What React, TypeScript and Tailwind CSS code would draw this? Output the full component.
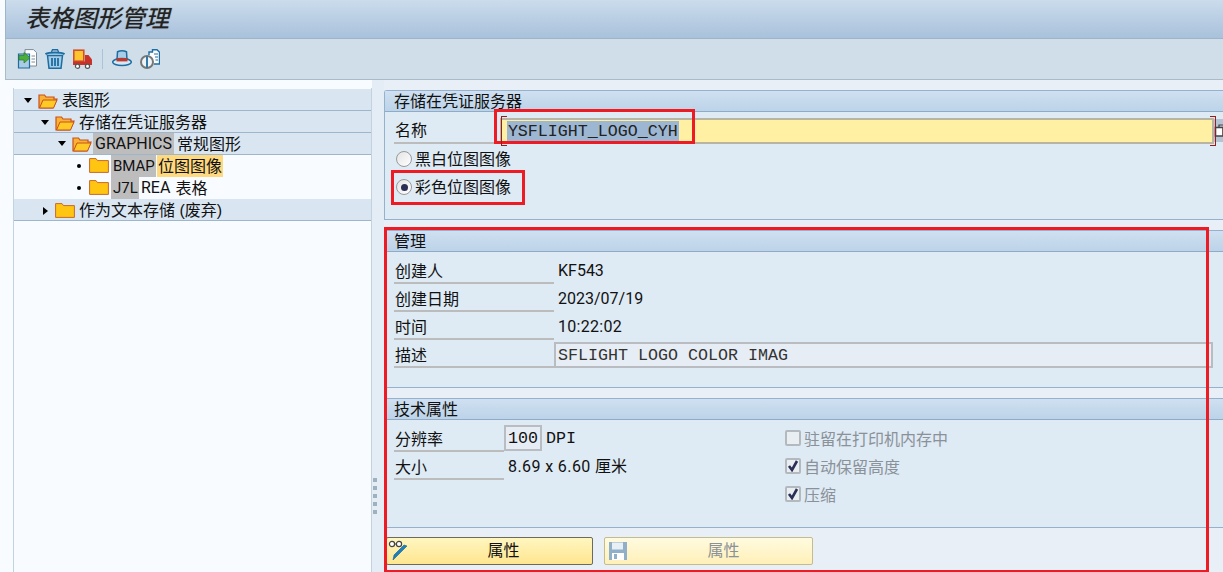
import type { ReactNode } from 'react'

const MONO = "[font-family:'Liberation_Mono',monospace] text-[16.67px]"

function FolderOpen() {
  return (
    <svg className="w-[20px] h-[18px] shrink-0" viewBox="0 0 20 18">
      <path d="M1 3V16H15L19 7H16V5H8L6.5 3Z" fill="#f9b233" stroke="#c8501e" strokeWidth="1.2" />
      <path d="M5 8H19L15.5 16H1.5Z" fill="#ffc926" stroke="#c8501e" strokeWidth="1" />
    </svg>
  )
}

function FolderClosed() {
  return (
    <svg className="w-[20px] h-[18px] shrink-0" viewBox="0 0 20 18">
      <path d="M.6 1.6H7L8.5 3.6H19.4V15.4H.6Z" fill="#ffc510" stroke="#c8682a" strokeWidth="1" />
    </svg>
  )
}

function ArrowDown() {
  return <span className="w-[10px] h-[18px] shrink-0 flex items-center justify-center mr-[5px]"><span className="w-0 h-0 border-x-[4px] border-x-transparent border-t-[5px] border-t-black" /></span>
}

function ArrowRight() {
  return <span className="w-[10px] h-[18px] shrink-0 flex items-center justify-center mr-[5px]"><span className="w-0 h-0 border-y-[4px] border-y-transparent border-l-[5px] border-l-black" /></span>
}

function Bullet() {
  return <span className="w-[10px] h-[18px] shrink-0 flex items-center justify-center mr-[5px]"><span className="w-[4px] h-[4px] rounded-full bg-black" /></span>
}

function TreeRow({ pad, blue, children }: { pad: string; blue?: boolean; children: ReactNode }) {
  return (
    <div className={`h-[22px] flex items-center whitespace-nowrap ${pad} ${blue ? 'bg-[#d9e6f1] border-b border-[#9db6cc]' : ''}`}>
      {children}
    </div>
  )
}

function Lat({ children }: { children: ReactNode }) {
  return <span className="[font-family:Roboto,sans-serif] text-[16px]">{children}</span>
}

function Panel({ title, height, children }: { title: string; height: string; children: ReactNode }) {
  return (
    <section className={`${height} border border-r-0 border-[#95b1cc] rounded-tl-[3px] bg-[#deeaf4] flex flex-col`}>
      <div className="h-[21px] shrink-0 pl-[9px] pt-[2px] flex items-center bg-gradient-to-b from-[#cfe0f1] to-[#bcd3e8] border-b border-[#8fabc8] text-[16px] text-[#111]">
        {title}
      </div>
      {children}
    </section>
  )
}

function InfoRow({ label, children }: { label: string; children: ReactNode }) {
  return (
    <div className="h-[28px] flex items-center">
      <div className="w-[160px] h-full pl-[1px] pt-[5px] flex items-center border-b-2 border-[#bcbcbc] ml-[9px] text-[16px]">{label}</div>
      {children}
    </div>
  )
}

function Radio({ checked, label }: { checked?: boolean; label: string }) {
  return (
    <div className="h-[28px] flex items-center pl-[11px]">
      <span className="w-[16px] h-[16px] rounded-full border border-[#9a9a9a] bg-gradient-to-br from-[#e4e4e4] to-white flex items-center justify-center">
        {checked && <span className="w-[7px] h-[7px] rounded-full bg-[#2b2f55]" />}
      </span>
      <span className="ml-[3px] pt-[1px] text-[16px]">{label}</span>
    </div>
  )
}

function Check({ checked, label }: { checked?: boolean; label: string }) {
  return (
    <div className="h-[28px] flex items-center">
      <span className="w-[16px] h-[16px] rounded-[2px] border-2 border-[#b4b9be] bg-[#e9eef3] flex items-center justify-center">
        {checked && (
          <svg className="w-[12px] h-[12px]" viewBox="0 0 12 12">
            <path d="M2 6 L5 10 L10 1" fill="none" stroke="#2b2f55" strokeWidth="2.6" />
          </svg>
        )}
      </span>
      <span className="ml-[3px] pt-[3px] text-[16px] text-[#8b9198]">{label}</span>
    </div>
  )
}

export default function App() {
  return (
    <div className="relative w-[1223px] h-[572px] overflow-hidden flex flex-col bg-[#f8fbff] text-[#111] [font-family:'Liberation_Sans','Noto_Sans_CJK_SC',sans-serif]">
      {/* Title + toolbar */}
      <header className="h-[39px] shrink-0 ml-[5px] pl-[19px] flex items-center bg-gradient-to-b from-[#cbdcec] to-[#a9c1db] border-l border-b border-[#9fb4c8]">
        <h1 className="italic text-[24px] leading-none text-[#222] [text-shadow:0_0_1px_#555]">表格图形管理</h1>
      </header>
      <div className="h-[41px] shrink-0 ml-[5px] pl-[11px] flex items-center gap-[8px] bg-[#d0dee9] border-l border-b border-[#a9bac9]">
        <svg className="w-[20px] h-[20px]" viewBox="0 0 20 20">
          <path d="M8 .6H16.5L19.5 3.6V17H8Z" fill="#fff" stroke="#7c8a96" />
          <path d="M1.5 5H12.5V19H1.5Z" fill="#a9cbe3" stroke="#1c6da3" strokeWidth="1.2" />
          <path d="M2 6.5H7V3.5L13 8.8L7 14V11H2Z" fill="#4caf3c" stroke="#2b7a22" strokeWidth=".7" />
          <path d="M14.5 7H18M14.5 10H18M14.5 13H18" stroke="#7c8a96" />
        </svg>
        <svg className="w-[20px] h-[20px]" viewBox="0 0 20 20">
          <path d="M.5 5.2C4 3 16 3 19.5 5.2" fill="#bcd8ea" stroke="#1c6da3" strokeWidth="2" />
          <path d="M6.5 3L7.5 .8H12.5L13.5 3" fill="none" stroke="#1c6da3" strokeWidth="1.4" />
          <path d="M2.5 6.5H17.5L16 19.3H4Z" fill="#a7cde6" stroke="#1c6da3" strokeWidth="1.5" />
          <path d="M7 9V17M10 9V17M13 9V17" stroke="#1c6da3" strokeWidth="1.8" />
        </svg>
        <svg className="w-[20px] h-[20px]" viewBox="0 0 20 20">
          <rect x=".8" y="1.2" width="10" height="11" fill="#ffc52e" stroke="#d4502a" strokeWidth="1.6" />
          <rect x="0" y="12.5" width="19" height="3.5" fill="#c8322a" />
          <path d="M12 6H15.5L19 10.5V14H12Z" fill="#c8322a" />
          <circle cx="4.5" cy="17.2" r="2.1" fill="#fff" stroke="#555" strokeWidth="1.2" />
          <circle cx="14.5" cy="17.2" r="2.1" fill="#fff" stroke="#555" strokeWidth="1.2" />
        </svg>
        <span className="w-px h-[20px] mx-[1px] bg-[#aac3d8]" />
        <svg className="w-[20px] h-[20px]" viewBox="0 0 20 20">
          <path d="M5 11L5.5 2.8C8 1.6 12 1.6 14.5 2.8L15 11Z" fill="#a9cde6" stroke="#1c6da3" strokeWidth="1.5" />
          <ellipse cx="10" cy="13" rx="9.3" ry="3.6" fill="#d8e8f3" stroke="#1c6da3" strokeWidth="1.5" />
          <rect x="4.5" y="9" width="11" height="3.4" fill="#b93a30" />
        </svg>
        <svg className="w-[20px] h-[20px]" viewBox="0 0 20 20">
          <path d="M9 6V3H12.5V.8H17L19.5 3.3V15H14" fill="#fff" stroke="#1c6da3" strokeWidth="1.4" />
          <path d="M14 5H18M15 8H18M15.5 11H18" stroke="#1c6da3" />
          <circle cx="7" cy="13" r="6" fill="#eef3f7" stroke="#777" strokeWidth="2" />
          <path d="M7 7.5V18.5" stroke="#1c6da3" strokeWidth="1.8" />
        </svg>
      </div>

      <div className="flex-1 flex min-h-0">
        {/* Tree */}
        <nav className="w-[359px] ml-[13px] mt-[8px] pt-[1px] border-l border-r border-[#c2d2df] text-[16px] shrink-0">
          <TreeRow pad="pl-[9px] pt-[2px]" blue><ArrowDown /><FolderOpen /><span className="ml-[4px]">表图形</span></TreeRow>
          <TreeRow pad="pl-[26px] pt-[2px]" blue><ArrowDown /><FolderOpen /><span className="ml-[4px]">存储在凭证服务器</span></TreeRow>
          <TreeRow pad="pl-[43px]" blue>
            <ArrowDown /><FolderOpen />
            <span className="ml-[1px] h-[21px] px-[2px] flex items-center bg-[#bdbdbd]"><Lat>GRAPHICS</Lat></span>
            <span className="ml-[3px] pt-[2px]">常规图形</span>
          </TreeRow>
          <TreeRow pad="pl-[60px]">
            <Bullet /><FolderClosed />
            <span className="ml-[2px] h-[22px] px-[2px] flex items-center bg-[#bdbdbd] w-[45px] text-[15px]"><span className="[font-family:Roboto,sans-serif]">BMAP</span></span>
            <span className="ml-[1px] h-[22px] px-[1px] pt-[1px] flex items-center bg-[#ffd97f]">位图图像</span>
          </TreeRow>
          <TreeRow pad="pl-[60px]">
            <Bullet /><FolderClosed />
            <span className="ml-[2px] h-[22px] px-[2px] flex items-center bg-[#bdbdbd] w-[28px] text-[15px]"><span className="[font-family:Roboto,sans-serif]">J7L</span></span>
            <span className="ml-[2px]"><Lat>REA</Lat></span>
            <span className="ml-[5px] pt-[2px]">表格</span>
          </TreeRow>
          <TreeRow pad="pl-[26px] pt-[2px]" blue><ArrowRight /><FolderClosed /><span className="ml-[4px]">作为文本存储 (废弃)</span></TreeRow>
        </nav>

        {/* Splitter */}
        <div className="w-[12px] shrink-0 bg-[#e4edf5] flex flex-col items-start justify-end pl-[1px] pb-[58px] gap-[4px]">
          {[0, 1, 2, 3, 4].map((i) => <span key={i} className="w-[4px] h-[4px] bg-[#9fb0bf]" />)}
        </div>

        {/* Right side */}
        <main className="flex-1 min-w-0 bg-[#e8eff6] pt-[10px] flex flex-col gap-[10px]">
          <Panel title="存储在凭证服务器" height="h-[130px]">
            <div className="h-[32px] mb-[1px] flex items-end">
              <div className="w-[105px] h-[28px] ml-[9px] pl-[1px] pt-[4px] flex items-center border-b-2 border-[#bcbcbc] text-[16px]">名称</div>
              <div className="w-[715px] h-[26px] ml-[1px] bg-[#fff0a3] border-2 border-[#b8b5a2] pl-[5px] pt-[1px] flex items-center">
                <span className={`${MONO} text-[#222] bg-[#9db7d3] leading-[22px] px-[1px]`}>YSFLIGHT_LOGO_CYH</span>
              </div>
              <div className="w-[9px] h-[23px] mb-[2px] bg-[#b6c3d3] overflow-hidden flex items-center">
                <svg className="w-[9px] h-[14px]" viewBox="0 0 9 14">
                  <path d="M1.5 3.5H9V12H1.5Z" fill="#fff" stroke="#444" strokeWidth="1.6" />
                  <path d="M5 3V1H9" fill="none" stroke="#444" strokeWidth="1.2" />
                </svg>
              </div>
            </div>
            <Radio label="黑白位图图像" />
            <Radio checked label="彩色位图图像" />
          </Panel>

          <Panel title="管理" height="h-[158px]">
            <div className="pt-[4px]">
              <InfoRow label="创建人"><span className="ml-[4px] pt-[2px]"><Lat>KF543</Lat></span></InfoRow>
              <InfoRow label="创建日期"><span className="ml-[4px] pt-[2px]"><Lat>2023/07/19</Lat></span></InfoRow>
              <InfoRow label="时间"><span className="ml-[4px] pt-[2px] tracking-[0.3px]"><Lat>10:22:02</Lat></span></InfoRow>
              <InfoRow label="描述">
                <div className={`w-[659px] h-[26px] self-end bg-[#e6edf4] border-2 border-[#b9bcc0] pl-[2px] flex items-center ${MONO} text-[#333]`}>
                  SFLIGHT LOGO COLOR IMAG
                </div>
              </InfoRow>
            </div>
          </Panel>

          <Panel title="技术属性" height="h-[130px]">
            <div className="pt-[4px] flex">
              <div className="w-[400px] shrink-0">
                <div className="h-[28px] flex items-center">
                  <div className="w-[110px] h-full ml-[9px] pl-[1px] pt-[5px] flex items-center border-b-2 border-[#bcbcbc] text-[16px]">分辨率</div>
                  <div className={`w-[38px] h-[26px] bg-[#e6edf4] border-2 border-[#b9bcc0] flex items-center justify-center ${MONO}`}>100</div>
                  <span className={`ml-[4px] ${MONO}`}>DPI</span>
                </div>
                <div className="h-[28px] flex items-center">
                  <div className="w-[110px] h-full ml-[9px] pl-[1px] pt-[5px] flex items-center border-b-2 border-[#bcbcbc] text-[16px]">大小</div>
                  <span className="ml-[4px] pt-[2px]"><span className="tracking-[0.4px]"><Lat>8.69 x 6.60</Lat></span> 厘米</span>
                </div>
              </div>
              <div>
                <Check label="驻留在打印机内存中" />
                <Check checked label="自动保留高度" />
                <Check checked label="压缩" />
              </div>
            </div>
          </Panel>

          {/* Buttons */}
          <div className="flex gap-[11px] pl-[2px] -mt-[1px]">
            <button className="relative w-[207px] h-[28px] pl-[28px] rounded-[2px] border border-[#6d6a5a] bg-gradient-to-b from-[#fff6c0] to-[#ffe68f] text-[16px] flex items-center justify-center">
              <svg className="absolute left-[1px] top-[1px] w-[22px] h-[22px]" viewBox="0 0 22 22">
                <circle cx="4" cy="5" r="2.6" fill="#fff" stroke="#444" strokeWidth="1.2" />
                <circle cx="11" cy="5" r="2.6" fill="#fff" stroke="#444" strokeWidth="1.2" />
                <path d="M6.6 5H8.4" stroke="#444" />
                <path d="M19 7L8 18L5 21L6 16L16 6Z" fill="#1f7fb8" stroke="#15608e" strokeWidth=".6" />
              </svg>
              属性
            </button>
            <button className="relative w-[209px] h-[28px] pl-[30px] rounded-[2px] border border-[#c4bb8f] bg-gradient-to-b from-[#fffbe0] to-[#fff0b8] text-[16px] text-[#8b9198] flex items-center justify-center">
              <svg className="absolute left-[3px] top-[3px] w-[20px] h-[20px]" viewBox="0 0 20 20">
                <path d="M1 1H19V19H1Z" fill="#8fb0c8" />
                <rect x="4" y="1.5" width="11" height="7" fill="#e8f0f6" />
                <rect x="4" y="12" width="12" height="7" fill="#fff" />
                <rect x="6" y="13" width="3" height="5" fill="#8fb0c8" />
              </svg>
              属性
            </button>
          </div>
        </main>
      </div>

      {/* Red annotation boxes */}
      <div className="absolute left-[494px] top-[109px] w-[201px] h-[35px] border-[3px] border-[#ed1c24]" />
      <div className="absolute left-[391px] top-[170px] w-[134px] h-[35px] border-[3px] border-[#ed1c24]" />
      <div className="absolute left-[384px] top-[227px] w-[825px] h-[345px] border-[3px] border-b-2 border-[#ed1c24]" />

      {/* Field brackets */}
      <div className="absolute left-[501px] top-[116px] w-[6px] h-[30px] border-l border-y border-[#a01818]" />
      <div className="absolute left-[1210px] top-[116px] w-[6px] h-[30px] border-r border-y border-[#a01818]" />
    </div>
  )
}
